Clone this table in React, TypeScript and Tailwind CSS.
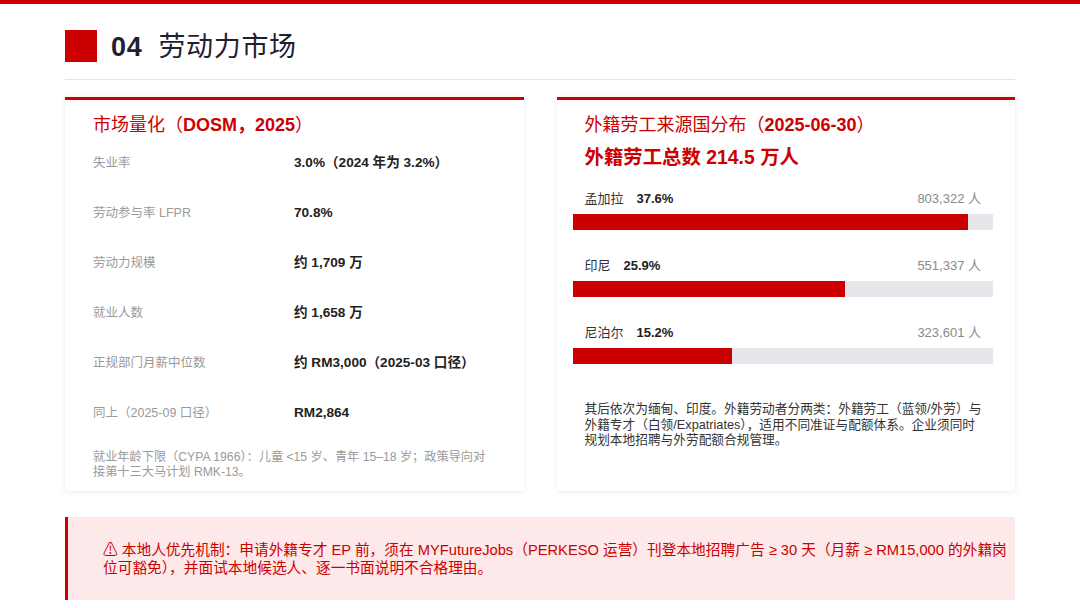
import React from "react"

const font = { fontFamily: '"Liberation Sans", "Noto Sans CJK SC", sans-serif' }

const stats = [
    { label: "失业率", value: <>3.0%（2024 年为 3.2%）</> },
    { label: "劳动参与率 LFPR", value: <>70.8%</> },
    { label: "劳动力规模", value: <>约 1,709 万</> },
    { label: "就业人数", value: <>约 1,658 万</> },
    { label: "正规部门月薪中位数", value: <>约 RM3,000（2025-03 口径）</> },
    { label: "同上（2025-09 口径）", value: <>RM2,864</> },
]

const origins = [
    { name: "孟加拉", pct: 37.6, count: "803,322" },
    { name: "印尼", pct: 25.9, count: "551,337" },
    { name: "尼泊尔", pct: 15.2, count: "323,601" },
]

export default function App() {
    return (
        <div style={font} className="w-[1080px] h-[608px] bg-white overflow-hidden flex flex-col">
            {/* top accent bar */}
            <div className="h-[4px] w-full bg-[#cc0000]" />

            <div className="flex flex-col px-[65px] pt-[26px]">
                {/* Header */}
                <div className="flex items-center h-[32px]">
                    <div className="w-[32px] h-[32px] bg-[#cc0000]" />
                    <h1 className="ml-[14px] mt-[3px] text-[27px] leading-none text-[#1e2130] tracking-wide">
                        <span className="font-bold">04</span>
                        <span className="ml-[16px]">劳动力市场</span>
                    </h1>
                </div>
                <div className="mt-[17px] h-px bg-[#e6e6e6]" />

                {/* Cards */}
                <div className="grid grid-cols-2 gap-[33px] mt-[17px] h-[394px]">
                    {/* Left card */}
                    <div className="flex flex-col border-t-[3px] border-[#cc0000] bg-white shadow-[0_1px_6px_rgba(0,0,0,0.08)] px-[28px]">
                        <h2 className="mt-[13px] h-[24px] flex items-center text-[18px] text-[#cc0000]">
                            市场量化（<span className="font-bold">DOSM，2025</span>）
                        </h2>
                        <div className="mt-[1px] flex flex-col">
                            {stats.map((s) => (
                                <div key={s.label} className="flex items-center h-[50px]">
                                    <span className="w-[201px] text-[12.5px] text-[#9a9a9a]">{s.label}</span>
                                    <span className="text-[13.6px] font-bold text-[#222222]">{s.value}</span>
                                </div>
                            ))}
                        </div>
                        <p className="mt-[12px] text-[12.2px] leading-[15px] text-[#9a9a9a] pr-[6px]">
                            就业年龄下限（CYPA 1966）：儿童 &lt;15 岁、青年 15–18 岁；政策导向对接第十三大马计划 RMK-13。
                        </p>
                    </div>

                    {/* Right card */}
                    <div className="flex flex-col border-t-[3px] border-[#cc0000] bg-white shadow-[0_1px_6px_rgba(0,0,0,0.08)] pl-[16px] pr-[22px]">
                        <h2 className="mt-[13px] h-[24px] flex items-center px-[12px] text-[18px] text-[#cc0000]">
                            外籍劳工来源国分布（<span className="font-bold">2025-06-30</span>）
                        </h2>
                        <div className="mt-[9px] h-[24px] flex items-center px-[12px] text-[19.4px] font-bold text-[#cc0000]">
                            外籍劳工总数 214.5 万人
                        </div>

                        <div className="mt-[19px] flex flex-col gap-[26px]">
                            {origins.map((o) => (
                                <div key={o.name} className="flex flex-col">
                                    <div className="flex items-center justify-between h-[20px] px-[12px] text-[13px]">
                                        <span className="text-[#333333]">
                                            {o.name}
                                            <span className="ml-[13px] font-bold text-[#222222]">{o.pct}%</span>
                                        </span>
                                        <span className="text-[#8a8a8a]">{o.count} 人</span>
                                    </div>
                                    <div className="mt-[5px] h-[16px] bg-[#e5e7eb]">
                                        <div className="h-full bg-[#cc0000]" style={{ width: `${(o.pct / 40) * 100}%` }} />
                                    </div>
                                </div>
                            ))}
                        </div>

                        <p className="mt-[38px] pl-[12px] pr-[9px] text-[12.7px] leading-[15.5px] text-[#333333]">
                            其后依次为缅甸、印度。外籍劳动者分两类：外籍劳工（蓝领/外劳）与外籍专才（白领/Expatriates），适用不同准证与配额体系。企业须同时规划本地招聘与外劳配额合规管理。
                        </p>
                    </div>
                </div>

                {/* Bottom notice */}
                <div className="mt-[26px] h-[83px] flex items-center border-l-[3px] border-[#cc0000] bg-[#fde8ea] pl-[35px] pr-[4px]">
                    <p className="text-[14.7px] leading-[18px] text-[#cc0000]">
                        ⚠ 本地人优先机制：申请外籍专才 EP 前，须在 MYFutureJobs（PERKESO 运营）刊登本地招聘广告 ≥ 30 天（月薪 ≥ RM15,000 的外籍岗位可豁免），并面试本地候选人、逐一书面说明不合格理由。
                    </p>
                </div>
            </div>
        </div>
    )
}
